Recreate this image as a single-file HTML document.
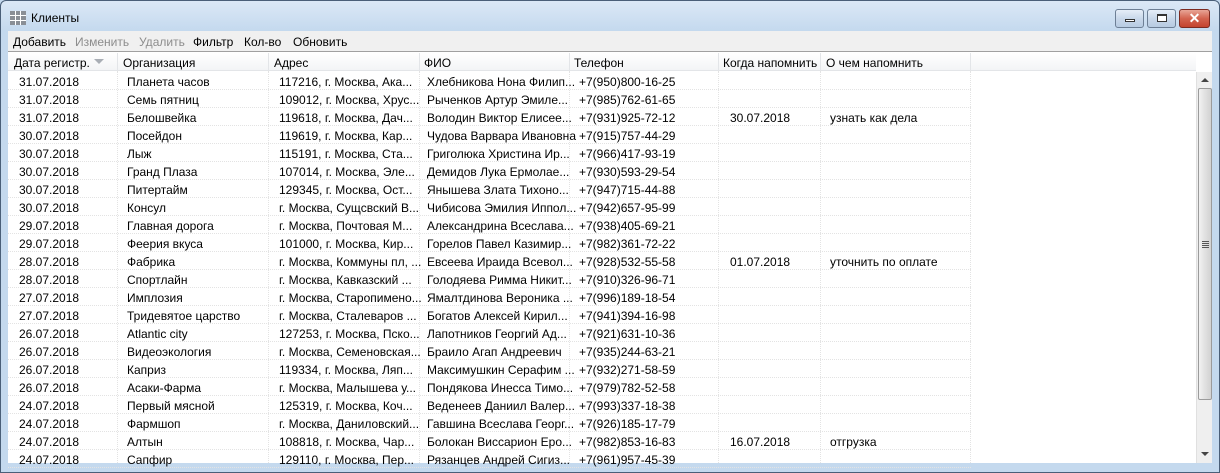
<!DOCTYPE html>
<html><head><meta charset="utf-8"><style>
*{margin:0;padding:0;box-sizing:border-box}
body{width:1220px;height:473px;overflow:hidden;background:#c4d9ee;font-family:"Liberation Sans",sans-serif;font-size:12px;color:#000;position:relative}
.frame{position:absolute;left:0;top:0;width:1220px;height:473px;border:1px solid #4a5f78;border-radius:6px 6px 0 0;background:linear-gradient(#dbe8f6,#c4d9ee 30px)}
.title{position:absolute;left:31px;top:11px;font-size:12px}
.ico{position:absolute;left:10px;top:11px;width:16px;height:14px;background:
linear-gradient(90deg,transparent 5px,#fff 5px,#fff 6px,transparent 6px,transparent 10px,#fff 10px,#fff 11px,transparent 11px),
linear-gradient(transparent 4px,#fff 4px,#fff 5px,transparent 5px,transparent 9px,#fff 9px,#fff 10px,transparent 10px),#8a8f96}
.btn{position:absolute;top:9px;height:19px;border:1px solid #6d7f95;border-radius:3px;background:linear-gradient(#e6eef8,#c9d8ea 50%,#b7cbe2)}
.btn.x{background:linear-gradient(#e8a597,#d3634f 50%,#c3432e);border-color:#7c2a20}
.client{position:absolute;left:8px;top:31px;width:1204px;height:432px;background:#fff}
.menu{position:absolute;left:0;top:0;width:1204px;height:21px;background:#f0f0f0;border-bottom:1px solid #a0a0a0}
.menu span{position:absolute;top:4px}
.hdr{position:absolute;left:0;top:22px;width:1188px;height:18px;background:linear-gradient(#fff,#f3f4f6);border-bottom:1px solid #e3e5e8}
.hdr span{position:absolute;top:3px}
.hs{position:absolute;top:0;width:1px;height:18px;background:#e3e5e8}
.row{position:absolute;left:0;width:963px;height:18px;border-bottom:1px dotted #e3e3e3}
.row span{position:absolute;top:3px;white-space:nowrap}
.vl{position:absolute;top:40px;width:0;height:392px;border-left:1px dotted #e3e3e3}
.sb{position:absolute;left:1188px;top:41px;width:16px;height:391px;background:#efefef;border-left:1px solid #e0e0e0}
.th{position:absolute;left:1px;top:16px;width:14px;height:312px;border:1px solid #9b9b9b;border-radius:2px;background:linear-gradient(90deg,#f2f2f2,#e1e1e1 50%,#d2d2d2)}
</style></head><body>
<div class="frame"></div>
<div class="ico"></div>
<div class="title">Клиенты</div>
<div class="btn" style="left:1115px;width:29px"><div style="position:absolute;left:9px;top:9px;width:10px;height:3px;border:1px solid #333;background:#fff"></div></div>
<div class="btn" style="left:1147px;width:29px"><div style="position:absolute;left:9px;top:4px;width:10px;height:8px;border:1px solid #333;border-top-width:2px;background:#fff"></div></div>
<div class="btn x" style="left:1179px;width:31px"><div style="position:absolute;left:0;top:0;width:29px;text-align:center;color:#fff;font-weight:bold;font-size:14px;line-height:17px">✕</div></div>
<div class="client">
<div class="menu">
<span style="left:5px">Добавить</span><span style="left:67px;color:#8d8d8d">Изменить</span><span style="left:131px;color:#8d8d8d">Удалить</span><span style="left:185px">Фильтр</span><span style="left:236px">Кол-во</span><span style="left:285px">Обновить</span>
</div>
<div class="hdr">
<span style="left:6px">Дата регистр.</span><span style="left:86px;top:6px;width:0;height:0;border-left:5px solid transparent;border-right:5px solid transparent;border-top:5px solid #a9aeb5"></span>
<span style="left:115px">Организация</span><span style="left:266px">Адрес</span><span style="left:416px">ФИО</span><span style="left:566px">Телефон</span><span style="left:715px">Когда напомнить</span><span style="left:818px">О чем напомнить</span>
<div class="hs" style="left:109px"></div><div class="hs" style="left:260px"></div><div class="hs" style="left:411px"></div><div class="hs" style="left:561px"></div><div class="hs" style="left:710px"></div><div class="hs" style="left:812px"></div><div class="hs" style="left:962px"></div>
</div>
<div class="vl" style="left:109px"></div><div class="vl" style="left:260px"></div><div class="vl" style="left:411px"></div><div class="vl" style="left:561px"></div><div class="vl" style="left:710px"></div><div class="vl" style="left:812px"></div><div class="vl" style="left:962px"></div>
<div id="rows"></div>
<div class="sb"><div style="position:absolute;left:4px;top:6px;border-left:4px solid transparent;border-right:4px solid transparent;border-bottom:4px solid #444"></div><div class="th"><div style="position:absolute;left:3px;top:152px;width:7px;height:7px;background:repeating-linear-gradient(#555 0 1px,transparent 1px 2px)"></div></div><div style="position:absolute;left:4px;top:380px;border-left:4px solid transparent;border-right:4px solid transparent;border-top:4px solid #444"></div></div>
</div>
<script>
var d=[["31.07.2018","Планета часов","117216, г. Москва, Ака...","Хлебникова Нона Филип...","+7(950)800-16-25","",""],
["31.07.2018","Семь пятниц","109012, г. Москва, Хрус...","Рыченков Артур Эмиле...","+7(985)762-61-65","",""],
["31.07.2018","Белошвейка","119618, г. Москва, Дач...","Володин Виктор Елисее...","+7(931)925-72-12","30.07.2018","узнать как дела"],
["30.07.2018","Посейдон","119619, г. Москва, Кар...","Чудова Варвара Ивановна","+7(915)757-44-29","",""],
["30.07.2018","Лыж","115191, г. Москва, Ста...","Григолюка Христина Ир...","+7(966)417-93-19","",""],
["30.07.2018","Гранд Плаза","107014, г. Москва, Эле...","Демидов Лука Ермолае...","+7(930)593-29-54","",""],
["30.07.2018","Питертайм","129345, г. Москва, Ост...","Янышева Злата Тихоно...","+7(947)715-44-88","",""],
["30.07.2018","Консул","г. Москва, Сущсвский В...","Чибисова Эмилия Иппол...","+7(942)657-95-99","",""],
["29.07.2018","Главная дорога","г. Москва, Почтовая М...","Александрина Всеслава...","+7(938)405-69-21","",""],
["29.07.2018","Феерия вкуса","101000, г. Москва, Кир...","Горелов Павел Казимир...","+7(982)361-72-22","",""],
["28.07.2018","Фабрика","г. Москва, Коммуны пл, ...","Евсеева Ираида Всевол...","+7(928)532-55-58","01.07.2018","уточнить по оплате"],
["28.07.2018","Спортлайн","г. Москва, Кавказский ...","Голодяева Римма Никит...","+7(910)326-96-71","",""],
["27.07.2018","Имплозия","г. Москва, Старопимено...","Ямалтдинова Вероника ...","+7(996)189-18-54","",""],
["27.07.2018","Тридевятое царство","г. Москва, Сталеваров ...","Богатов Алексей Кирил...","+7(941)394-16-98","",""],
["26.07.2018","Atlantic city","127253, г. Москва, Пско...","Лапотников Георгий Ад...","+7(921)631-10-36","",""],
["26.07.2018","Видеоэкология","г. Москва, Семеновская...","Браило Агап Андреевич","+7(935)244-63-21","",""],
["26.07.2018","Каприз","119334, г. Москва, Ляп...","Максимушкин Серафим ...","+7(932)271-58-59","",""],
["26.07.2018","Асаки-Фарма","г. Москва, Малышева у...","Пондякова Инесса Тимо...","+7(979)782-52-58","",""],
["24.07.2018","Первый мясной","125319, г. Москва, Коч...","Веденеев Даниил Валер...","+7(993)337-18-38","",""],
["24.07.2018","Фармшоп","г. Москва, Даниловский...","Гавшина Всеслава Георг...","+7(926)185-17-79","",""],
["24.07.2018","Алтын","108818, г. Москва, Чар...","Болокан Виссарион Еро...","+7(982)853-16-83","16.07.2018","отгрузка"],
["24.07.2018","Сапфир","129110, г. Москва, Пер...","Рязанцев Андрей Сигиз...","+7(961)957-45-39","",""]];
var x=[11,119,271,419,571,722,822],h="";
d.forEach(function(r,i){h+='<div class="row" style="top:'+(41+i*18)+'px">';r.forEach(function(c,j){h+='<span style="left:'+x[j]+'px">'+c+'</span>'});h+='</div>'});
document.getElementById("rows").innerHTML=h;
</script>
</body></html>
